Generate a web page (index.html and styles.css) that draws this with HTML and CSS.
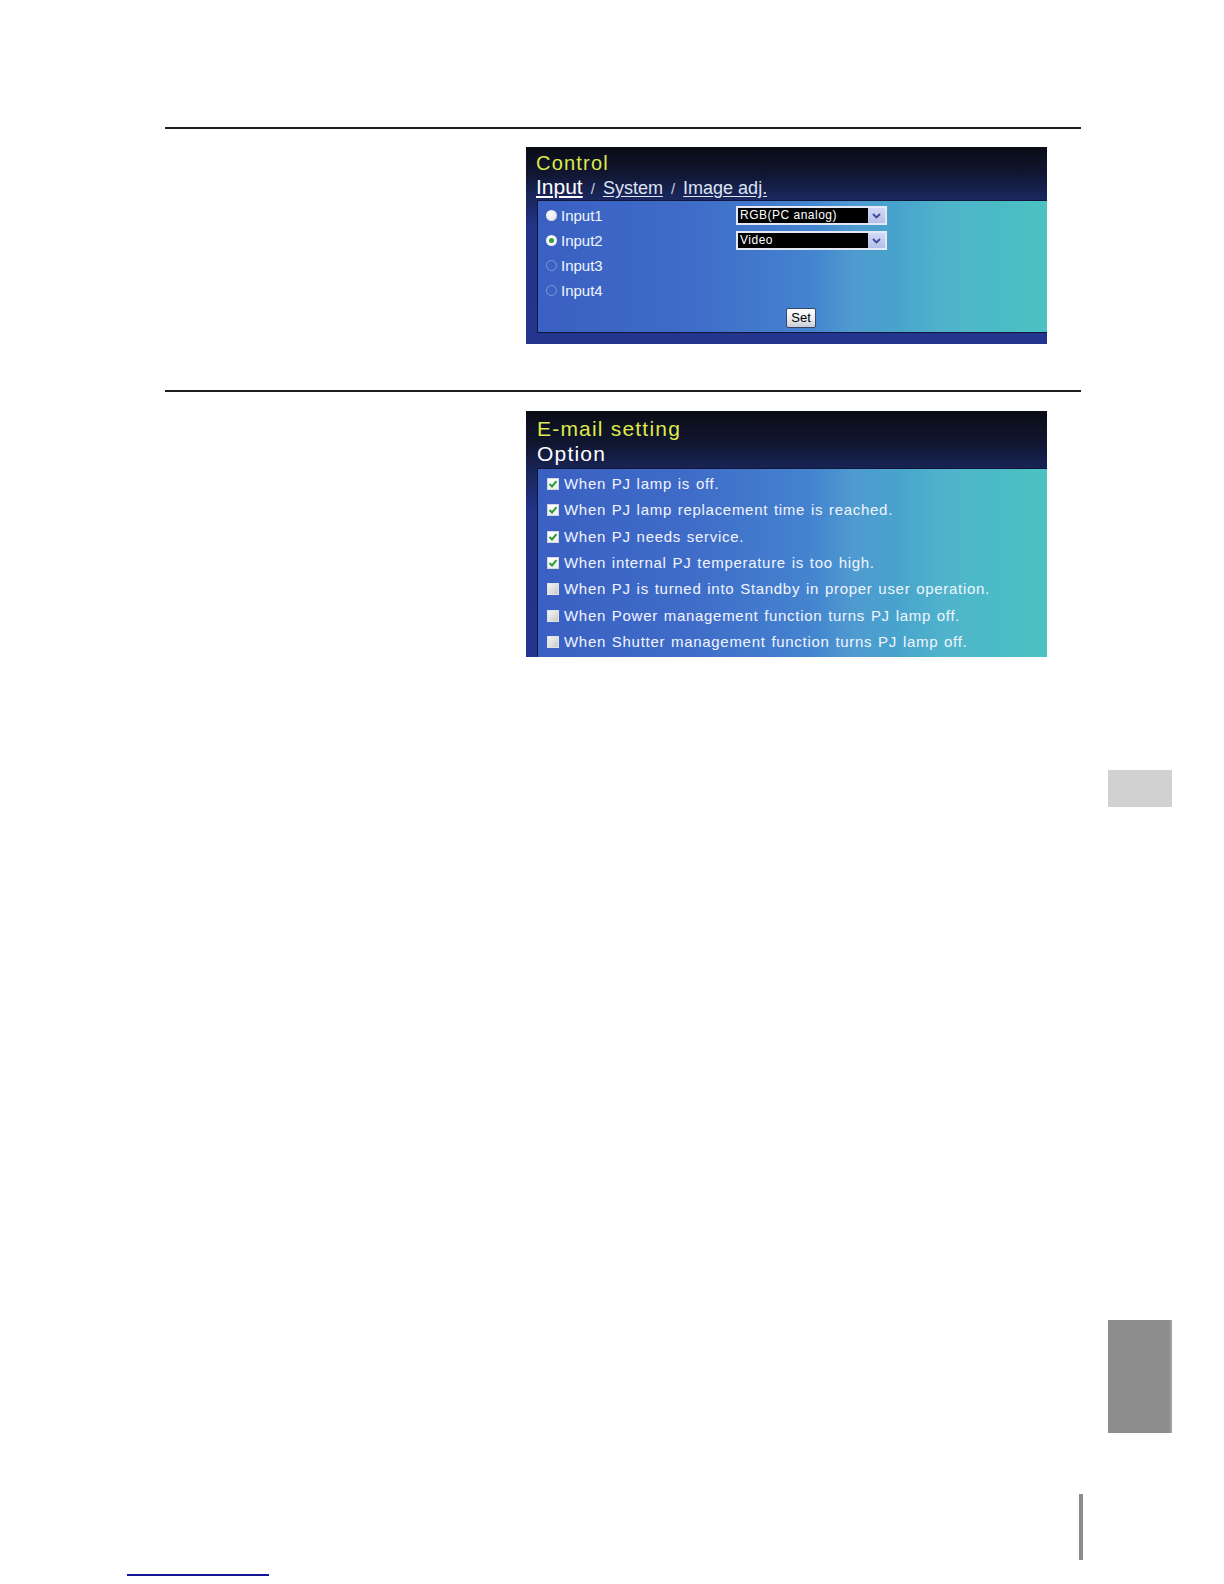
FILE: index.html
```html
<!DOCTYPE html>
<html>
<head>
<meta charset="utf-8">
<link rel="stylesheet" href="styles.css">
</head>
<body>
<div class="page">
  <div class="top">
    <div class="content">
      <div class="rule"></div>
      <div class="panel panel-control">
        <div class="title">Control</div>
        <div class="nav"><span class="nav-active">Input</span><span class="sep">/</span><span class="nav-link">System</span><span class="sep">/</span><span class="nav-link">Image adj.</span></div>
        <div class="box box-control">
          <div class="input-grid">
            <div class="radio-row"><span class="radio radio-full"></span><span class="label">Input1</span></div>
            <div class="select"><span class="select-text">RGB(PC analog)</span><span class="select-btn"><svg width="9" height="6" viewBox="0 0 9 6"><path d="M1 1 L4.5 4.5 L8 1" fill="none" stroke="#3a4a9a" stroke-width="1.8"/></svg></span></div>
            <div class="radio-row"><span class="radio radio-on"><span class="dot"></span></span><span class="label">Input2</span></div>
            <div class="select"><span class="select-text">Video</span><span class="select-btn"><svg width="9" height="6" viewBox="0 0 9 6"><path d="M1 1 L4.5 4.5 L8 1" fill="none" stroke="#3a4a9a" stroke-width="1.8"/></svg></span></div>
            <div class="radio-row"><span class="radio radio-off"></span><span class="label">Input3</span></div>
            <div></div>
            <div class="radio-row"><span class="radio radio-off"></span><span class="label">Input4</span></div>
            <div></div>
          </div>
          <div class="set-row"><span class="set-btn">Set</span></div>
        </div>
        <div class="panel-foot"></div>
      </div>
      <div class="rule rule-2"></div>
      <div class="panel panel-mail">
        <div class="title title-mail">E-mail setting</div>
        <div class="subtitle">Option</div>
        <div class="box box-mail">
          <div class="check-row"><span class="check check-on"><svg width="10" height="10" viewBox="0 0 10 10"><path d="M1.5 5 L4 7.5 L8.5 2.2" fill="none" stroke="#2f9a34" stroke-width="2"/></svg></span><span class="label">When PJ lamp is off.</span></div>
          <div class="check-row"><span class="check check-on"><svg width="10" height="10" viewBox="0 0 10 10"><path d="M1.5 5 L4 7.5 L8.5 2.2" fill="none" stroke="#2f9a34" stroke-width="2"/></svg></span><span class="label">When PJ lamp replacement time is reached.</span></div>
          <div class="check-row"><span class="check check-on"><svg width="10" height="10" viewBox="0 0 10 10"><path d="M1.5 5 L4 7.5 L8.5 2.2" fill="none" stroke="#2f9a34" stroke-width="2"/></svg></span><span class="label">When PJ needs service.</span></div>
          <div class="check-row"><span class="check check-on"><svg width="10" height="10" viewBox="0 0 10 10"><path d="M1.5 5 L4 7.5 L8.5 2.2" fill="none" stroke="#2f9a34" stroke-width="2"/></svg></span><span class="label">When internal PJ temperature is too high.</span></div>
          <div class="check-row"><span class="check check-off"></span><span class="label">When PJ is turned into Standby in proper user operation.</span></div>
          <div class="check-row"><span class="check check-off"></span><span class="label">When Power management function turns PJ lamp off.</span></div>
          <div class="check-row"><span class="check check-off"></span><span class="label">When Shutter management function turns PJ lamp off.</span></div>
        </div>
      </div>
    </div>
    <div class="tabs">
      <div class="tab tab-light"></div>
      <div class="tab tab-dark"></div>
    </div>
  </div>
  <div class="footer">
    <div class="vbar"></div>
    <div class="blue-line"></div>
  </div>
</div>
</body>
</html>
```
FILE: styles.css
```css
html, body {
  margin: 0;
  padding: 0;
  background: #ffffff;
}
body {
  font-family: "Liberation Sans", Arial, sans-serif;
}
.page {
  width: 1224px;
  height: 1584px;
  overflow: hidden;
}
.top {
  display: flex;
  align-items: flex-start;
}
.content {
  margin-left: 165px;
  width: 916px;
  padding-top: 127px;
}
.rule {
  height: 2px;
  background: #1e1e1e;
}
.rule-2 {
  margin-top: 46px;
}
.panel {
  margin-left: 361px;
  width: 521px;
  overflow: hidden;
  color: #ffffff;
  background: linear-gradient(180deg, #0a0c14 0%, #111733 14%, #1a275e 26%, #22338a 40%, #24358f 100%);
}
.panel-control {
  margin-top: 18px;
  height: 197px;
}
.panel-mail {
  margin-top: 19px;
  height: 246px;
}
.title {
  padding-left: 10px;
  padding-top: 4px;
  font-size: 20px;
  line-height: 24px;
  letter-spacing: 1.2px;
  color: #dfe94a;
}
.nav {
  padding-left: 10px;
  font-size: 18px;
  line-height: 24px;
  height: 24px;
}
.nav-active {
  font-size: 21px;
  color: #ffffff;
  text-decoration: underline;
  text-underline-offset: 2px;
}
.nav-link {
  color: #dfe4f4;
  text-decoration: underline;
  text-underline-offset: 2px;
}
.sep {
  color: #c8cce0;
  font-size: 15px;
  padding: 0 8px;
}
.box {
  margin-left: 11px;
  border: 1px solid #0f1638;
  border-right: none;
  background:
    linear-gradient(90deg, rgba(255,255,255,0) 0%, rgba(255,255,255,0) 55%, rgba(255,255,255,0.05) 62%, rgba(255,255,255,0) 70%, rgba(255,255,255,0.04) 80%, rgba(255,255,255,0) 90%),
    linear-gradient(90deg, #3a60c2 0%, #3f6cc8 30%, #4482cf 52%, #47a0cd 68%, #4ab7c8 85%, #4cc2c2 100%);
}
.box-control {
  margin-top: 1px;
  padding-top: 2px;
  padding-bottom: 4px;
}
.input-grid {
  display: grid;
  grid-template-columns: 190px 151px;
  grid-auto-rows: 25px;
  padding-left: 8px;
  align-items: center;
}
.radio-row {
  display: flex;
  align-items: center;
  gap: 4px;
}
.label {
  font-size: 15px;
  line-height: 18px;
  color: #f2f5ff;
  white-space: nowrap;
}
.radio {
  width: 11px;
  height: 11px;
  border-radius: 50%;
  box-sizing: border-box;
  display: inline-flex;
  align-items: center;
  justify-content: center;
}
.radio-full {
  background: radial-gradient(circle at 40% 35%, #ffffff 0%, #e8e8ec 60%, #bfc3cf 100%);
}
.radio-on {
  background: radial-gradient(circle at 40% 35%, #ffffff 0%, #eef0f2 70%, #c8ccd4 100%);
}
.dot {
  width: 5px;
  height: 5px;
  border-radius: 50%;
  background: #3c9c3a;
}
.radio-off {
  border: 1px solid rgba(170, 200, 240, 0.55);
}
.select {
  display: flex;
  height: 19px;
  box-sizing: border-box;
  border: 2px solid #e2e8f6;
  background: #000000;
}
.select-text {
  flex: 1;
  font-size: 12px;
  line-height: 15px;
  padding-left: 2px;
  color: #ffffff;
  letter-spacing: 0.5px;
}
.select-btn {
  width: 17px;
  background: linear-gradient(180deg, #d2d8f4 0%, #b6bfea 100%);
  display: flex;
  align-items: center;
  justify-content: center;
}
.set-row {
  padding-left: 248px;
  margin-top: 5px;
}
.set-btn {
  display: inline-block;
  width: 30px;
  height: 20px;
  box-sizing: border-box;
  border: 1px solid #3a4668;
  border-radius: 2px;
  background: linear-gradient(180deg, #ffffff 0%, #e6e8ee 60%, #c9ccd6 100%);
  color: #000000;
  font-size: 13px;
  line-height: 18px;
  text-align: center;
}
.panel-foot {
  height: 11px;
}
.title-mail {
  padding-top: 6px;
  padding-left: 11px;
  font-size: 21px;
  line-height: 24px;
}
.subtitle {
  padding-left: 11px;
  font-size: 21px;
  line-height: 25px;
  letter-spacing: 1.2px;
  color: #ffffff;
}
.box-mail {
  margin-top: 2px;
  padding-top: 2px;
  padding-left: 9px;
  border-bottom: none;
  height: 200px;
}
.check-row {
  display: flex;
  align-items: center;
  gap: 5px;
  height: 26.3px;
}
.check {
  width: 12px;
  height: 12px;
  box-sizing: border-box;
  display: inline-flex;
  align-items: center;
  justify-content: center;
}
.check-on {
  background: linear-gradient(180deg, #ffffff 0%, #eef0f0 100%);
  border: 1px solid #d0d6e0;
}
.check-off {
  background: linear-gradient(135deg, #f4f4f4 0%, #dcdcdc 60%, #c8c8c8 100%);
  border: 1px solid #e2e2e2;
}
.box-mail .label {
  font-size: 15px;
  letter-spacing: 0.7px;
  word-spacing: 1px;
}
.tabs {
  margin-left: 27px;
  width: 64px;
  padding-top: 770px;
}
.tab-light {
  height: 37px;
  background: #d1d1d1;
}
.tab-dark {
  margin-top: 513px;
  height: 113px;
  background: linear-gradient(90deg, #8e8d8d 0%, #8e8d8d 95%, #a8a8a8 100%);
}
.footer {
  padding-top: 61px;
}
.vbar {
  margin-left: 1079px;
  width: 4px;
  height: 66px;
  background: #8c8c8c;
}
.blue-line {
  margin-top: 14px;
  margin-left: 127px;
  width: 142px;
  height: 2px;
  background: #15159a;
}
```
